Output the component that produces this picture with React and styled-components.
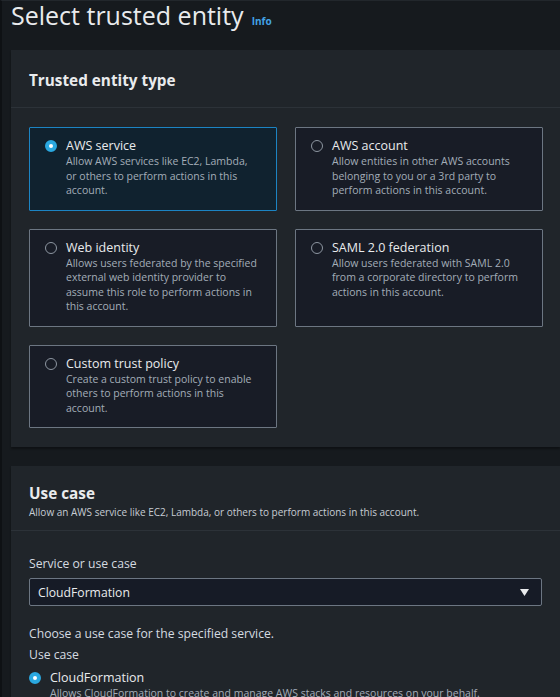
import React from 'react';
import styled, { createGlobalStyle } from 'styled-components';

const GlobalStyle = createGlobalStyle`
  html, body {
    margin: 0;
    padding: 0;
    background: #161a1e;
    font-family: "Open Sans", "Noto Sans", sans-serif;
    overflow: hidden;
  }
`;

const entityTypes = [
  {
    id: 'service',
    title: 'AWS service',
    text: 'Allow AWS services like EC2, Lambda, or others to perform actions in this account.',
  },
  {
    id: 'account',
    title: 'AWS account',
    text: 'Allow entities in other AWS accounts belonging to you or a 3rd party to perform actions in this account.',
  },
  {
    id: 'web',
    title: 'Web identity',
    text: 'Allows users federated by the specified external web identity provider to assume this role to perform actions in this account.',
  },
  {
    id: 'saml',
    title: 'SAML 2.0 federation',
    text: 'Allow users federated with SAML 2.0 from a corporate directory to perform actions in this account.',
  },
  {
    id: 'custom',
    title: 'Custom trust policy',
    text: 'Create a custom trust policy to enable others to perform actions in this account.',
  },
];

const App = () => {
  const selected = 'service';

  return (
    <Page>
      <GlobalStyle />
      <TitleRow>
        <Title>Select trusted entity</Title>
        <Info>Info</Info>
      </TitleRow>

      <Panel>
        <PanelHeader>
          <PanelTitle>Trusted entity type</PanelTitle>
        </PanelHeader>
        <CardGrid>
          {entityTypes.map((item) => (
            <Card key={item.id} active={item.id === selected}>
              <Radio active={item.id === selected} />
              <div>
                <CardTitle>{item.title}</CardTitle>
                <CardText>{item.text}</CardText>
              </div>
            </Card>
          ))}
        </CardGrid>
      </Panel>

      <Panel>
        <PanelHeader compact>
          <PanelTitle>Use case</PanelTitle>
          <PanelDesc>Allow an AWS service like EC2, Lambda, or others to perform actions in this account.</PanelDesc>
        </PanelHeader>
        <PanelBody>
          <Label>Service or use case</Label>
          <Select>
            <span>CloudFormation</span>
            <svg width="9" height="7" viewBox="0 0 9 7">
              <path d="M0 0 H9 L4.5 7 Z" fill="#e9ebed" />
            </svg>
          </Select>
          <Hint>Choose a use case for the specified service.</Hint>
          <Label>Use case</Label>
          <OptionRow>
            <Radio active />
            <div>
              <CardTitle>CloudFormation</CardTitle>
              <CardText>Allows CloudFormation to create and manage AWS stacks and resources on your behalf.</CardText>
            </div>
          </OptionRow>
        </PanelBody>
      </Panel>
    </Page>
  );
};

export default App;

const Page = styled.div`
  height: 697px;
  border-left: 2px solid #0e1114;
  border-top: 1px solid #22272c;
  padding-left: 9px;
  box-sizing: border-box;
  overflow: hidden;
`;

const TitleRow = styled.div`
  display: flex;
  align-items: baseline;
  gap: 8px;
  height: 49px;
`;

const Title = styled.h1`
  margin: 0;
  font-size: 25px;
  font-weight: 400;
  line-height: 28px;
  color: #e9ebed;
`;

const Info = styled.span`
  font-size: 10px;
  font-weight: 700;
  color: #42a3e6;
`;

const Panel = styled.section`
  background: #20252a;
  width: 549px;
  margin-bottom: 19px;
  box-shadow: 0 2px 2px rgba(0, 0, 0, 0.35);
`;

const PanelHeader = styled.div`
  padding: ${(p) => (p.compact ? '18px 18px 11px' : '21px 18px 17px')};
  border-bottom: 1px solid #2c3238;
`;

const PanelTitle = styled.h2`
  margin: 0;
  font-size: 15.3px;
  font-weight: 700;
  line-height: 19px;
  color: #e9ebed;
`;

const PanelDesc = styled.p`
  margin: 2px 0 0;
  font-size: 10px;
  line-height: 14px;
  color: #c6ccd3;
`;

const CardGrid = styled.div`
  display: grid;
  grid-template-columns: 248px 248px;
  column-gap: 18px;
  row-gap: 18px;
  padding: 19px 18px 19px;
`;

const Card = styled.div`
  display: flex;
  gap: 9px;
  box-sizing: border-box;
  padding: 9px 17px 12px 15px;
  border: 1px solid ${(p) => (p.active ? '#1c84c3' : '#6c7682')};
  border-radius: 1px;
  background: ${(p) => (p.active ? '#10222f' : '#181c26')};
`;

const Radio = styled.span`
  flex: none;
  box-sizing: border-box;
  width: 12px;
  height: 12px;
  margin-top: 3px;
  border-radius: 50%;
  border: ${(p) => (p.active ? '4px solid #2aa8e0' : '1px solid #8d96a1')};
  background: ${(p) => (p.active ? '#ffffff' : 'transparent')};
`;

const CardTitle = styled.div`
  font-size: 12.5px;
  line-height: 17px;
  color: #e9ebed;
`;

const CardText = styled.div`
  font-size: 10.5px;
  line-height: 14.5px;
  color: #a3adb8;
`;

const PanelBody = styled.div`
  padding: 24px 18px 0;
`;

const Label = styled.div`
  font-size: 12.2px;
  line-height: 17px;
  color: #d5dbe0;
`;

const Select = styled.div`
  display: flex;
  align-items: center;
  justify-content: space-between;
  box-sizing: border-box;
  width: 513px;
  height: 28px;
  margin: 6px 0 19px;
  padding: 0 12px 0 8px;
  border: 1px solid #6c7682;
  border-radius: 2px;
  background: #161b26;
  font-size: 12.2px;
  color: #e9ebed;
`;

const Hint = styled.div`
  font-size: 12.2px;
  line-height: 17px;
  color: #d5dbe0;
  margin-bottom: 4px;
`;

const OptionRow = styled.div`
  display: flex;
  gap: 9px;
  margin-top: 6px;
`;
